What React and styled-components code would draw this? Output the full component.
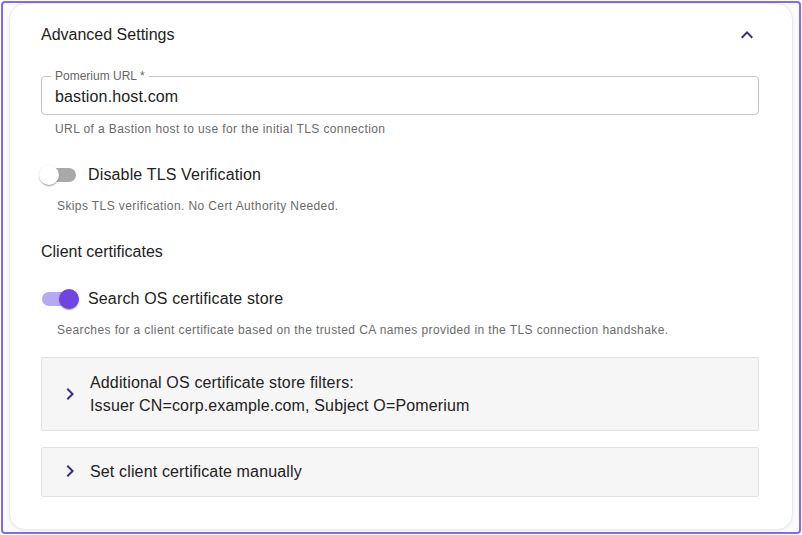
import React from 'react';
import styled, { createGlobalStyle } from 'styled-components';

const GlobalStyle = createGlobalStyle`
    html, body {
        margin: 0;
        padding: 0;
        background: #ffffff;
        font-family: 'Liberation Sans', Arial, sans-serif;
        color: #222222;
    }
    * {
        box-sizing: border-box;
    }
`;

const Chevron = ({ rotate = 0, size = 24 }) => (
    <svg
        width={size}
        height={size}
        viewBox='0 0 24 24'
        style={{ transform: `rotate(${rotate}deg)` }}
    >
        <path
            d='M16.59 8.59 12 13.17 7.41 8.59 6 10l6 6 6-6z'
            fill='#3d2c80'
        />
    </svg>
);

const Switch = ({ checked, label }) => (
    <SwitchLabel>
        <SwitchRoot>
            <Track $checked={checked} />
            <Thumb $checked={checked} />
        </SwitchRoot>
        <span>{label}</span>
    </SwitchLabel>
);

const Accordion = ({ children }) => (
    <AccordionBox>
        <IconSlot>
            <Chevron rotate={-90} />
        </IconSlot>
        <AccordionText>{children}</AccordionText>
    </AccordionBox>
);

const App = () => {
    return (
        <>
            <GlobalStyle />
            <Frame>
                <Card>
                    <Header>
                        <h3>Advanced Settings</h3>
                        <Chevron rotate={180} />
                    </Header>

                    <Field>
                        <FieldLabel>Pomerium URL *</FieldLabel>
                        <FieldInput>bastion.host.com</FieldInput>
                    </Field>
                    <Helper $indent={14} $top={6}>
                        URL of a Bastion host to use for the initial TLS
                        connection
                    </Helper>

                    <Switch checked={false} label='Disable TLS Verification' />
                    <Helper $indent={16}>
                        Skips TLS verification. No Cert Authority Needed.
                    </Helper>

                    <SectionTitle>Client certificates</SectionTitle>

                    <Switch checked label='Search OS certificate store' />
                    <Helper $indent={16}>
                        Searches for a client certificate based on the trusted
                        CA names provided in the TLS connection handshake.
                    </Helper>

                    <Accordions>
                        <Accordion>
                            Additional OS certificate store filters:
                            <br />
                            Issuer CN=corp.example.com, Subject O=Pomerium
                        </Accordion>
                        <Accordion>Set client certificate manually</Accordion>
                    </Accordions>
                </Card>
            </Frame>
        </>
    );
};

const Frame = styled.div`
    margin: 1px;
    height: 533px;
    border: 2px solid #7f6cf0;
    border-radius: 4px;
    padding: 0 6px 2px 6px;
    display: flex;
    background: #fbfbfb;
`;

const Card = styled.div`
    flex: 1;
    background: #ffffff;
    border: 1px solid #ebebeb;
    border-radius: 16px;
    box-shadow: 0 1px 3px rgba(0, 0, 0, 0.06);
    padding: 0 33px 0 31px;
    display: flex;
    flex-direction: column;
`;

const Header = styled.div`
    height: 62px;
    display: flex;
    align-items: center;
    justify-content: space-between;

    h3 {
        margin: 0;
        font-size: 16px;
        font-weight: 400;
        color: #222;
    }
`;

const Field = styled.div`
    position: relative;
    margin-top: 10px;
    height: 39px;
    border: 1px solid #c6c6c6;
    border-radius: 4px;
    display: flex;
    align-items: center;
    padding: 2px 13px 0;
`;

const FieldLabel = styled.span`
    position: absolute;
    top: -9px;
    left: 9px;
    padding: 0 4px;
    background: #ffffff;
    font-size: 12px;
    line-height: 16px;
    color: #666666;
`;

const FieldInput = styled.div`
    font-size: 16px;
    letter-spacing: 0.15px;
    color: #222222;
`;

const Helper = styled.p`
    margin: ${(p) => p.$top ?? 4}px 0 0 ${(p) => p.$indent}px;
    font-size: 12px;
    line-height: 16px;
    letter-spacing: 0.4px;
    color: #6b6b6b;
`;

const SwitchLabel = styled.label`
    margin: 19px 0 0 -11px;
    display: flex;
    align-items: center;
    font-size: 16px;
    letter-spacing: 0.15px;
    color: #222;
`;

const SwitchRoot = styled.span`
    position: relative;
    width: 58px;
    height: 38px;
    flex-shrink: 0;
`;

const Track = styled.span`
    position: absolute;
    left: 12px;
    top: 12px;
    width: 34px;
    height: 14px;
    border-radius: 7px;
    background: ${(p) => (p.$checked ? '#b7a8f2' : '#a9a9a9')};
`;

const Thumb = styled.span`
    position: absolute;
    top: 9px;
    left: ${(p) => (p.$checked ? 29 : 9)}px;
    width: 20px;
    height: 20px;
    border-radius: 50%;
    background: ${(p) => (p.$checked ? '#6d45e3' : '#ffffff')};
    box-shadow: 0 2px 1px -1px rgba(0, 0, 0, 0.2),
        0 1px 1px 0 rgba(0, 0, 0, 0.14), 0 1px 3px 0 rgba(0, 0, 0, 0.12);
`;

const SectionTitle = styled.div`
    margin-top: 26px;
    font-size: 16px;
    line-height: 24px;
    color: #222;

    & + ${SwitchLabel} {
        margin-top: 16px;
    }
`;

const Accordions = styled.div`
    margin-top: 19px;
    display: flex;
    flex-direction: column;
    gap: 16px;
`;

const AccordionBox = styled.div`
    background: #f6f6f6;
    border: 1px solid #e2e2e2;
    border-radius: 2px;
    padding: 11px 16px 13px;
    display: flex;
    align-items: center;
    gap: 8px;

    &:first-child {
        padding: 13px 16px;
    }
`;

const IconSlot = styled.span`
    display: flex;
`;

const AccordionText = styled.div`
    font-size: 16px;
    line-height: 23px;
    letter-spacing: 0.15px;
    color: #222;
`;

export default App;
